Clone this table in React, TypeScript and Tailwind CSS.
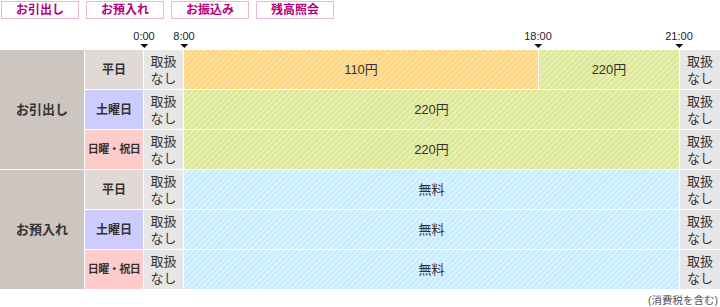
const FONT = "font-['Liberation_Sans','Noto_Sans_CJK_JP',sans-serif]";

const tabs = ['お引出し', 'お預入れ', 'お振込み', '残高照会'];

const marks = [
  { label: '0:00', x: 144 },
  { label: '8:00', x: 184 },
  { label: '18:00', x: 538 },
  { label: '21:00', x: 679 },
];

const orange = 'bg-[repeating-linear-gradient(135deg,#ffd57f_0px,#ffd57f_2px,#ffdf9e_2px,#ffdf9e_4px)]';
const green = 'bg-[repeating-linear-gradient(135deg,#dce897_0px,#dce897_2px,#e6eeb0_2px,#e6eeb0_4px)]';
const blue = 'bg-[repeating-linear-gradient(135deg,#c8ecff_0px,#c8ecff_2px,#d8f3ff_2px,#d8f3ff_4px)]';

const dayBg: Record<string, string> = {
  平日: 'bg-[#e0d9d6] text-[12px]',
  土曜日: 'bg-[#ccccff] text-[12px]',
  '日曜・祝日': 'bg-[#ffcccc] text-[11px] tracking-[-0.5px]',
};

function NoService() {
  return (
    <div className="flex items-center justify-center bg-[#e6e6e6] text-[13px] leading-[17px] text-[#333]">
      <span className="w-[26px]">取扱なし</span>
    </div>
  );
}

function Day({ name }: { name: string }) {
  return (
    <div className={`flex items-center justify-center font-bold text-[#333] ${dayBg[name]}`}>
      {name}
    </div>
  );
}

function Bar({ text, cls, span }: { text: string; cls: string; span?: boolean }) {
  return (
    <div className={`flex items-center justify-center text-[13px] text-[#333] ${cls} ${span ? 'col-span-2' : ''}`}>
      {text}
    </div>
  );
}

export default function App() {
  return (
    <div className={`w-[720px] h-[307px] bg-white ${FONT}`}>
      {/* tabs */}
      <div className="flex gap-[7px] pl-[1px] pt-[1px]">
        {tabs.map((t) => (
          <div
            key={t}
            className="flex h-[18px] w-[78px] items-center justify-center border border-[#f0b4da] text-[12px] font-bold text-[#b3007c]"
          >
            {t}
          </div>
        ))}
      </div>

      {/* time axis */}
      <div className="relative h-[31px]">
        {marks.map((m) => (
          <div
            key={m.label}
            className="absolute top-[11px] flex -translate-x-1/2 flex-col items-center"
            style={{ left: m.x }}
          >
            <span className="text-[11px] leading-[13px] text-[#222]">{m.label}</span>
            <span className="mt-[1px] h-0 w-0 border-x-[4px] border-t-[4px] border-x-transparent border-t-[#111]" />
          </div>
        ))}
      </div>

      {/* table */}
      <div className="grid grid-cols-[84px_58px_39px_354px_140px_40px] grid-rows-[repeat(6,39px)] gap-[1px]">
        <div className="row-span-3 flex items-center justify-center bg-[#cdc5c0] text-[13px] font-bold text-[#333]">
          お引出し
        </div>
        <Day name="平日" />
        <NoService />
        <Bar text="110円" cls={orange} />
        <Bar text="220円" cls={green} />
        <NoService />

        <Day name="土曜日" />
        <NoService />
        <Bar text="220円" cls={green} span />
        <NoService />

        <Day name="日曜・祝日" />
        <NoService />
        <Bar text="220円" cls={green} span />
        <NoService />

        <div className="row-span-3 flex items-center justify-center bg-[#cdc5c0] text-[13px] font-bold text-[#333]">
          お預入れ
        </div>
        <Day name="平日" />
        <NoService />
        <Bar text="無料" cls={blue} span />
        <NoService />

        <Day name="土曜日" />
        <NoService />
        <Bar text="無料" cls={blue} span />
        <NoService />

        <Day name="日曜・祝日" />
        <NoService />
        <Bar text="無料" cls={blue} span />
        <NoService />
      </div>

      <div className="pr-[2px] pt-[5px] text-right text-[10.5px] leading-[12px] text-[#555]">(消費税を含む)</div>
    </div>
  );
}
